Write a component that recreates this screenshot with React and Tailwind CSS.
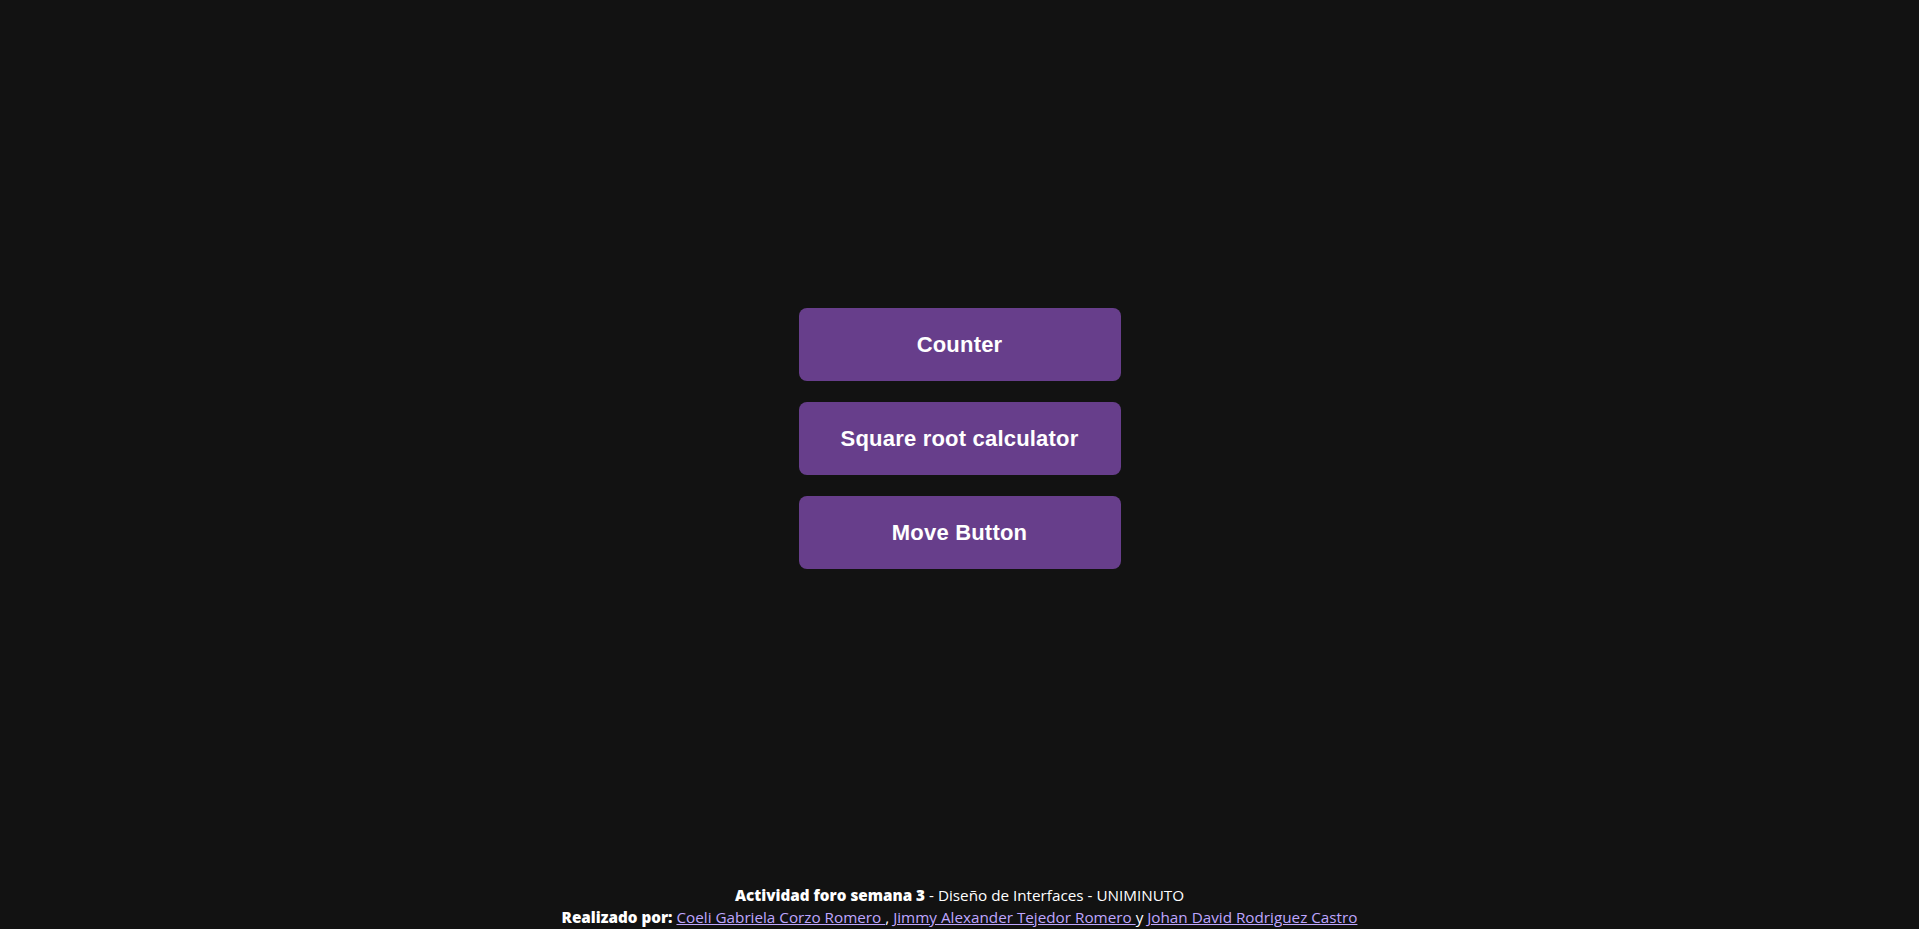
import React from 'react';

const items = ['Counter', 'Square root calculator', 'Move Button'];

const App = () => {
  return (
    <div className="min-h-screen flex flex-col bg-[#121212] text-white">
      {/* Menu */}
      <main className="flex-1 flex items-center justify-center pb-[8px]">
        <div className="flex flex-col gap-[21px]">
          {items.map((label) => (
            <button
              key={label}
              className="w-[322px] h-[73px] rounded-[8px] bg-[#673e8b] text-white text-[22px] font-bold tracking-[0.2px] font-['Liberation_Sans',sans-serif]"
            >
              {label}
            </button>
          ))}
        </div>
      </main>

      {/* Footer */}
      <footer className="text-center text-[15.25px] leading-[22px] pb-[1px] font-['Open_Sans',sans-serif]">
        <p>
          <strong className="font-extrabold">Actividad foro semana 3</strong> - Diseño de Interfaces - UNIMINUTO
        </p>
        <p>
          <strong className="font-extrabold">Realizado por:</strong>{' '}
          <a href="#" className="underline text-[#bfa6ff]">Coeli Gabriela Corzo Romero </a>,{' '}
          <a href="#" className="underline text-[#bfa6ff]">Jimmy Alexander Tejedor Romero </a>y{' '}
          <a href="#" className="underline text-[#bfa6ff]">Johan David Rodriguez Castro</a>
        </p>
      </footer>
    </div>
  );
};

export default App;
